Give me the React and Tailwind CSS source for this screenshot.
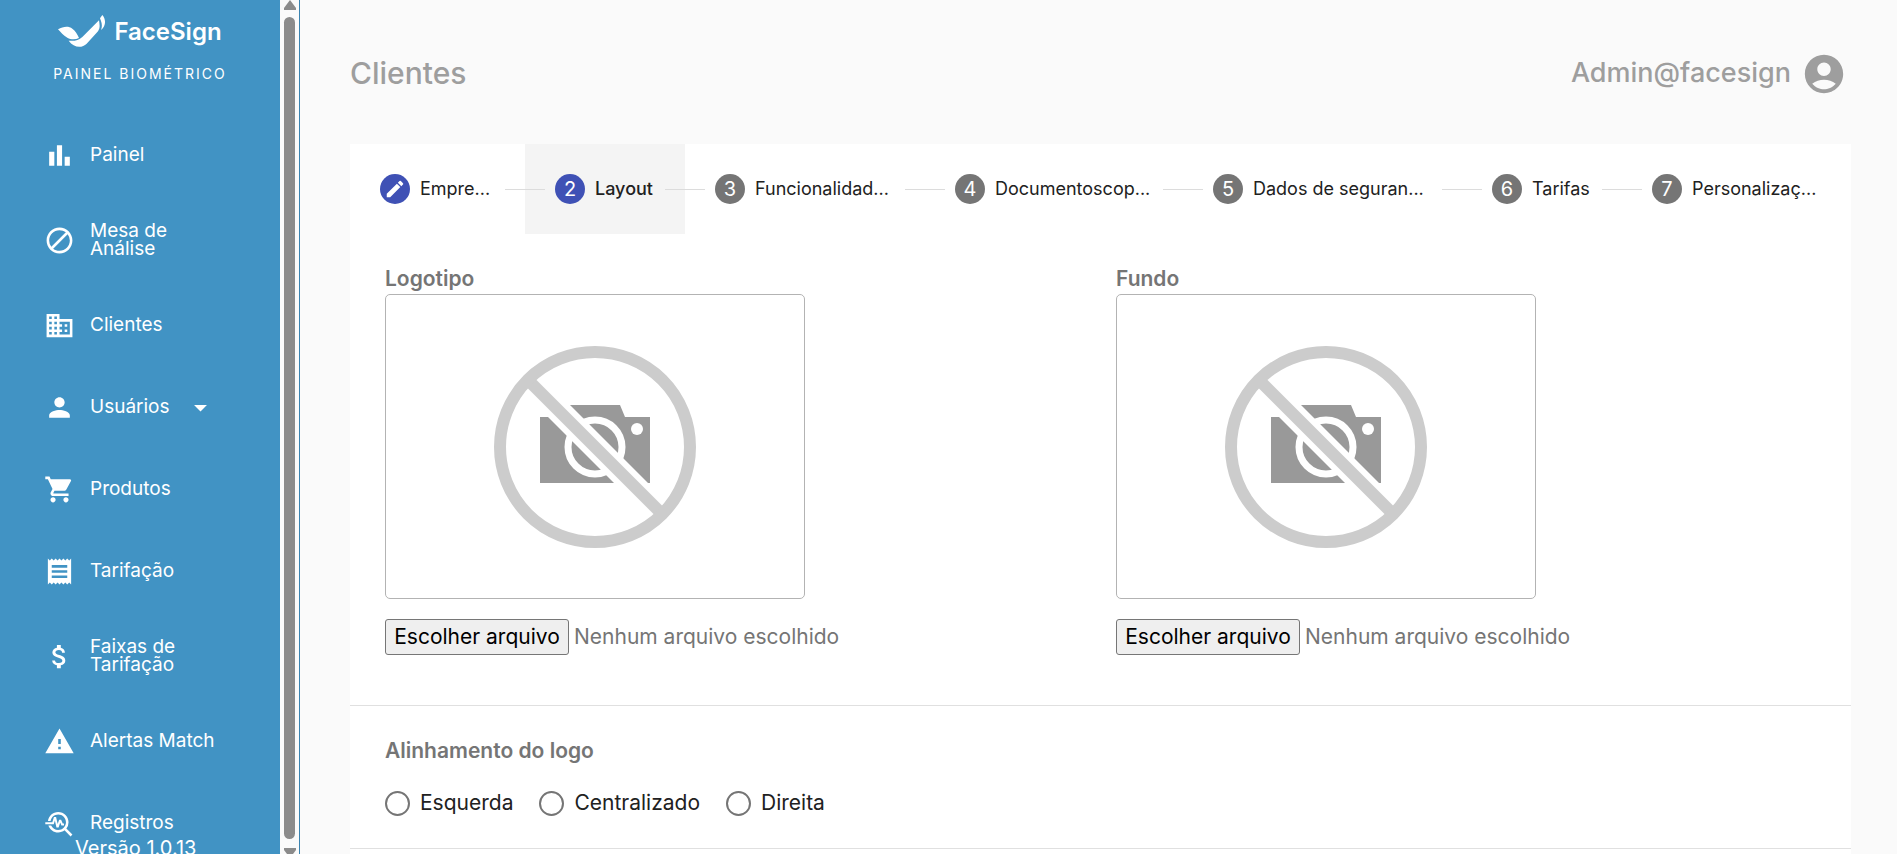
import React, { useRef, useState } from 'react';
import {
    MdAccountCircle,
    MdArrowDropDown,
    MdAttachMoney,
    MdBarChart,
    MdBlock,
    MdBusiness,
    MdCreate,
    MdPerson,
    MdReceipt,
    MdShoppingCart,
    MdTroubleshoot,
    MdWarning,
} from 'react-icons/md';

const menuItems = [
    { label: 'Painel', icon: MdBarChart },
    { label: 'Mesa de Análise', icon: MdBlock, tall: true },
    { label: 'Clientes', icon: MdBusiness },
    { label: 'Usuários', icon: MdPerson, expandable: true },
    { label: 'Produtos', icon: MdShoppingCart },
    { label: 'Tarifação', icon: MdReceipt },
    { label: 'Faixas de Tarifação', icon: MdAttachMoney, tall: true },
    { label: 'Alertas Match', icon: MdWarning },
    { label: 'Registros', icon: MdTroubleshoot },
];

const steps = [
    { label: 'Empre...', grow: 'grow-[145]', done: true },
    { label: 'Layout', grow: 'grow-[130]', active: true },
    { label: 'Funcionalidad...', grow: 'grow-[210]' },
    { label: 'Documentoscop...', grow: 'grow-[228]' },
    { label: 'Dados de seguran...', grow: 'grow-[249]' },
    { label: 'Tarifas', grow: 'grow-[130]' },
    { label: 'Personalizaç...', grow: 'grow-[199]' },
];

const Logo = () => (
    <div className="flex items-center justify-center gap-2 text-white">
        <svg className="h-[33px] w-[48px]" viewBox="0 0 144 99" fill="currentColor">
            <path d="M0 43C16 34 32 33 43 41c9 6 15 17 20 28-11 5-24 5-35-1C15 62 9 52 0 43z" />
            <path d="M32 77c16 2 30-1 41-11l50-50c1 10 5 20-3 33L86 86c-15 15-39 12-54-9z" />
            <path d="M126 10l7-10c11 13 12 32-4 45 5-13 2-22-3-35z" />
        </svg>
        <span className="text-2xl leading-8 font-semibold">FaceSign</span>
    </div>
);

const MenuItem = ({ label, icon: Icon, expandable, tall }) => (
    <a href="#" className={`flex items-center gap-[15px] pl-[44px] text-white ${tall ? 'h-[88px]' : 'h-[82px]'}`}>
        <Icon className="size-[31px] shrink-0" />
        <span className={`text-[19px] leading-[18px] ${tall ? 'w-[100px]' : ''}`}>{label}</span>
        {expandable && <MdArrowDropDown className="size-[31px]" />}
    </a>
);

const Scrollbar = () => (
    <div className="flex w-[19px] shrink-0 flex-col items-center justify-between bg-[#fafafa] text-[#8b8b8b]">
        <svg className="h-[10px] w-[14px]" viewBox="0 0 14 10" fill="currentColor">
            <path d="M7 0l6 8v2H1V8z" />
        </svg>
        <div className="mt-[7px] mb-[9px] w-[11px] grow rounded-full bg-[#8b8b8b]" />
        <svg className="h-[6px] w-[14px]" viewBox="0 0 14 6" fill="currentColor">
            <path d="M1 0h12v2l-3 4H4L1 2z" />
        </svg>
    </div>
);

const Sidebar = () => (
    <aside className="flex shrink-0 border-r border-[#3a83b0]">
        <div className="relative w-[280px] overflow-hidden bg-[#4193c4]">
            <div className="h-[114px] pt-[15px]">
                <Logo />
                <p className="pt-3 text-center text-sm leading-7 tracking-[2px] text-white">PAINEL BIOMÉTRICO</p>
            </div>
            <nav>
                {menuItems.map((item) => (
                    <MenuItem key={item.label} {...item} />
                ))}
            </nav>
            <span className="absolute -bottom-2 left-[75px] text-xl leading-7 text-white">Versão 1.0.13</span>
        </div>
        <Scrollbar />
    </aside>
);

const Step = ({ step, number }) => (
    <button
        type="button"
        className={`flex h-[90px] min-w-0 basis-0 items-center gap-[10px] pl-[30px] text-left whitespace-nowrap ${step.grow} ${
            step.active ? 'bg-[#f4f4f4] font-medium' : ''
        }`}
    >
        <span
            className={`flex size-[30px] shrink-0 items-center justify-center rounded-full text-xl font-normal text-white ${
                step.active || step.done ? 'bg-[#3f51b5]' : 'bg-[#757575]'
            }`}
        >
            {step.done ? <MdCreate className="size-[22px]" /> : number}
        </span>
        <span className="text-lg leading-6 text-[#212121]">{step.label}</span>
    </button>
);

const NoImage = () => (
    <svg className="size-[202px]" viewBox="0 0 202 202">
        <path d="M46 71h25l5-12h50l5 12h25v66H46z" fill="#999" />
        <circle cx="101" cy="101" r="27" fill="none" stroke="#fff" strokeWidth="7" />
        <circle cx="143" cy="83" r="6" fill="#fff" />
        <path d="M45 45l112 112" stroke="#fff" strokeWidth="24" />
        <path d="M36 36l130 130" stroke="#ccc" strokeWidth="12" />
        <circle cx="101" cy="101" r="95" fill="none" stroke="#ccc" strokeWidth="12" />
    </svg>
);

const ImageUpload = ({ id, label }) => {
    const inputRef = useRef(null);
    const [fileName, setFileName] = useState('');

    return (
        <div>
            <label htmlFor={id} className="block text-[21px] leading-[30px] font-semibold text-[#757575]">
                {label}
            </label>
            <div className="flex h-[305px] w-[420px] items-center justify-center rounded-[5px] border border-[#b3b3b3]">
                <NoImage />
            </div>
            <div className="mt-5 flex items-center gap-[5px] text-[21px]">
                <input
                    ref={inputRef}
                    id={id}
                    type="file"
                    className="hidden"
                    onChange={(e) => setFileName(e.target.files[0]?.name || '')}
                />
                <button
                    type="button"
                    onClick={() => inputRef.current.click()}
                    className="h-9 w-[184px] rounded-[3px] border border-[#767676] bg-[#efefef] whitespace-nowrap text-black"
                >
                    Escolher arquivo
                </button>
                <span className="text-[#757575]">{fileName || 'Nenhum arquivo escolhido'}</span>
            </div>
        </div>
    );
};

const App = () => (
    <div className="flex h-screen overflow-hidden bg-[#fafafa] font-[Inter,sans-serif]">
        <Sidebar />
        <main className="min-w-0 grow overflow-hidden pr-[46px] pl-[50px]">
            <header className="flex h-[144px] items-center justify-between pt-[3px] text-[#9e9e9e]">
                <h1 className="text-[30px] font-medium">Clientes</h1>
                <div className="flex items-center gap-[10px] pr-1">
                    <span className="text-[27px] font-medium">Admin@facesign</span>
                    <MdAccountCircle className="size-[46px]" />
                </div>
            </header>

            <section className="bg-white pb-10">
                <div className="flex">
                    {steps.map((step, index) => (
                        <React.Fragment key={step.label}>
                            {index > 0 && <span className="z-10 -mx-5 w-10 shrink-0 self-center border-t border-[#dcdcdc]" />}
                            <Step step={step} number={index + 1} />
                        </React.Fragment>
                    ))}
                </div>

                <div className="grid grid-cols-2 border-b border-[#e0e0e0] pt-[30px] pr-1 pb-[50px] pl-[35px]">
                    <ImageUpload id="logotipo" label="Logotipo" />
                    <ImageUpload id="fundo" label="Fundo" />
                </div>

                <fieldset className="border-b border-[#e0e0e0] px-[35px] pt-[30px] pb-8">
                    <legend className="float-left w-full text-[21px] leading-[30px] font-semibold text-[#757575]">
                        Alinhamento do logo
                    </legend>
                    <div className="clear-both flex gap-[26px] pt-6 text-[#212121]">
                        {['Esquerda', 'Centralizado', 'Direita'].map((option) => (
                            <label key={option} className="flex items-center gap-[10px] text-[21px] leading-[26px]">
                                <input
                                    type="radio"
                                    name="alinhamento"
                                    value={option}
                                    className="size-[25px] appearance-none rounded-full border-2 border-[#757575] checked:border-8 checked:border-[#3f51b5]"
                                />
                                {option}
                            </label>
                        ))}
                    </div>
                </fieldset>
            </section>
        </main>
    </div>
);

export default App;
